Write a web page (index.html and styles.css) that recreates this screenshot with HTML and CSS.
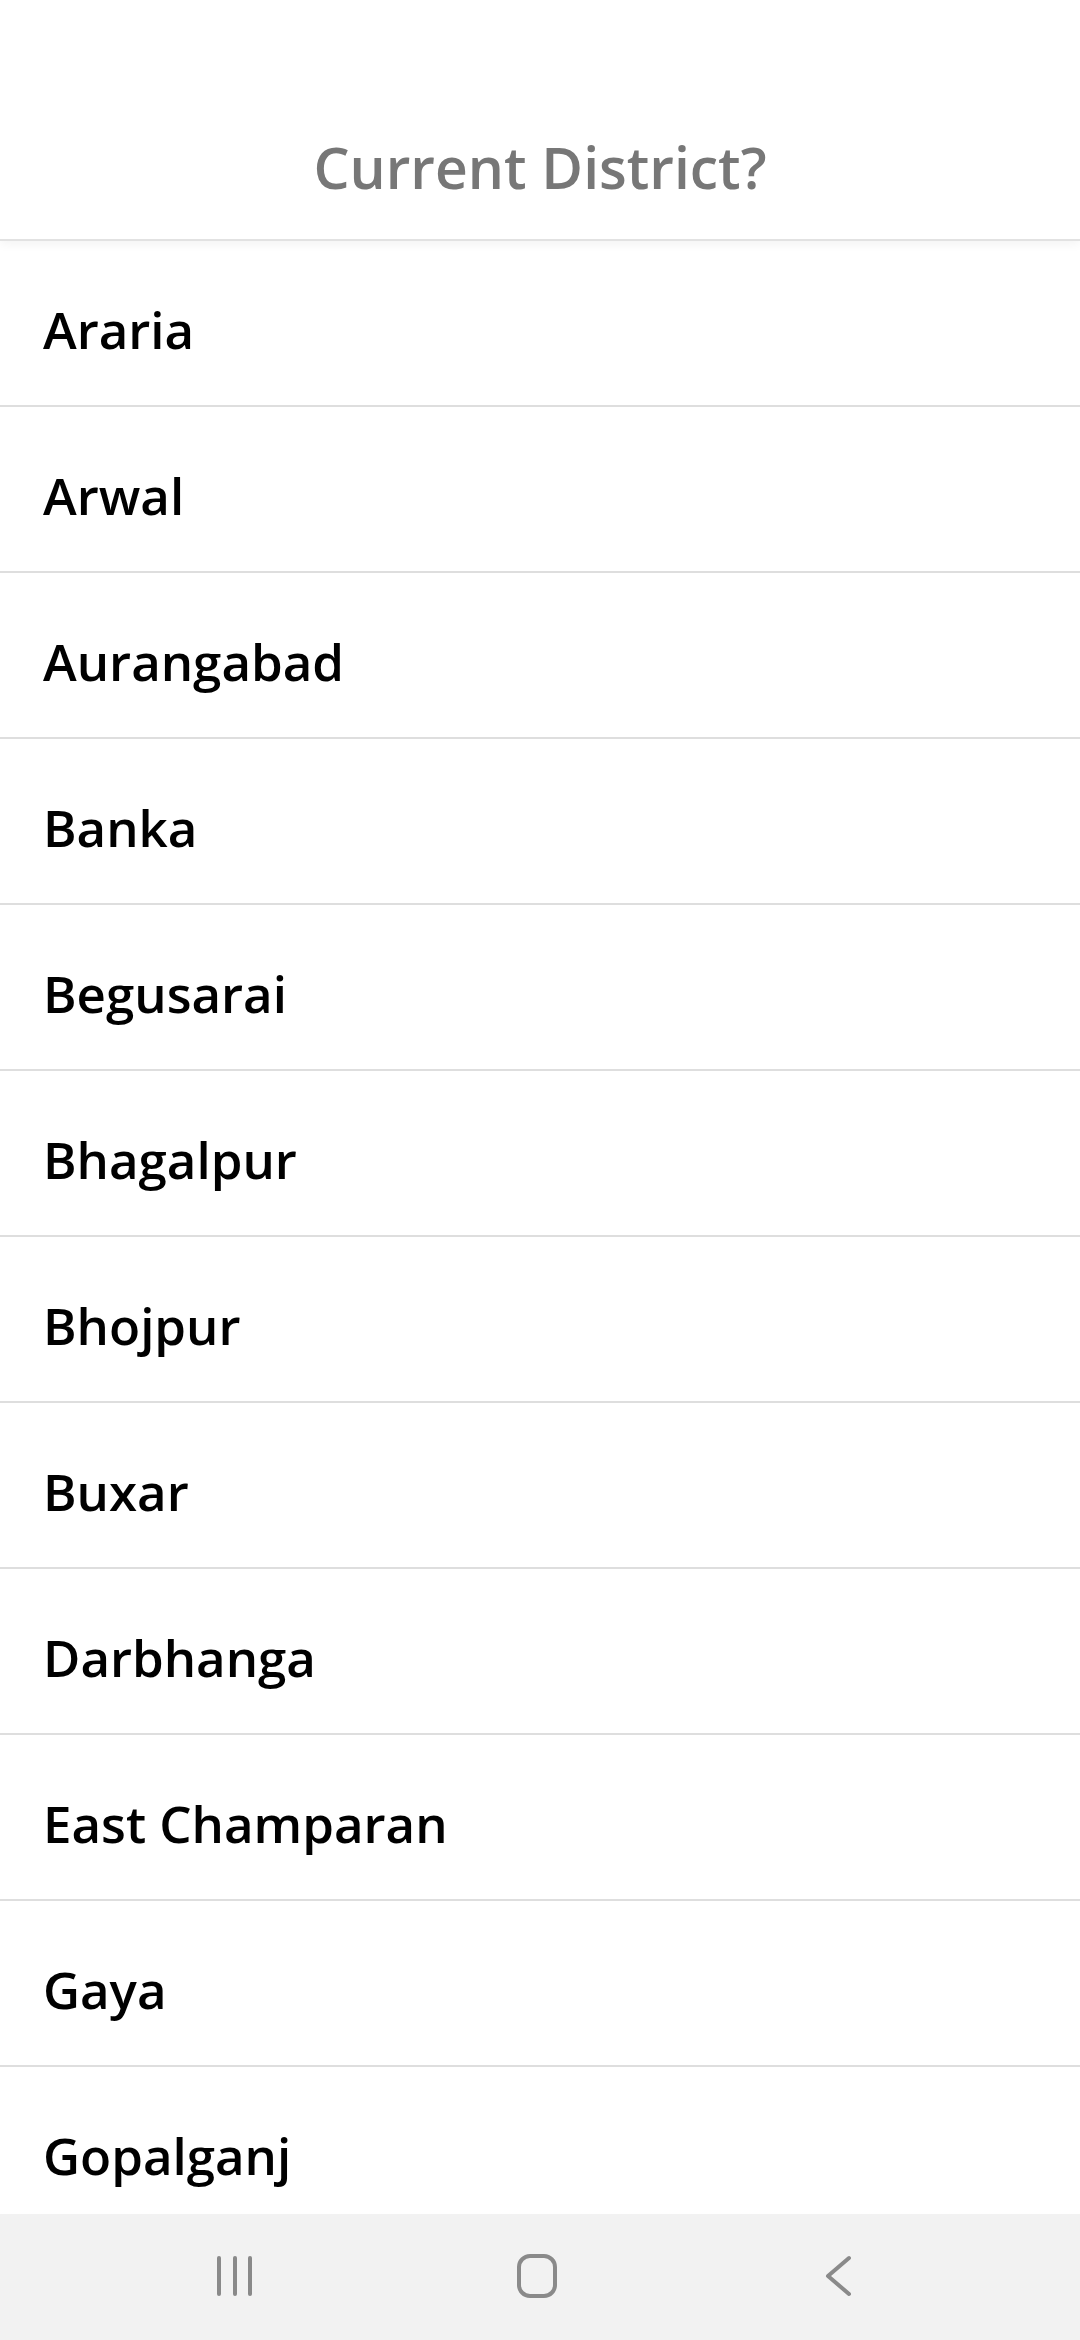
FILE: index.html
```html
<!DOCTYPE html>
<html>
<head>
<meta charset="utf-8">
<link rel="stylesheet" href="styles.css">
</head>
<body>
<div class="screen">
  <header class="header"><h1 class="title">Current District?</h1></header>
  <ul class="list">
    <li class="row">Araria</li>
    <li class="row">Arwal</li>
    <li class="row">Aurangabad</li>
    <li class="row">Banka</li>
    <li class="row">Begusarai</li>
    <li class="row">Bhagalpur</li>
    <li class="row">Bhojpur</li>
    <li class="row">Buxar</li>
    <li class="row">Darbhanga</li>
    <li class="row">East Champaran</li>
    <li class="row">Gaya</li>
    <li class="row">Gopalganj</li>
  </ul>
  <nav class="navbar">
    <span class="nav-icon">
      <svg width="60" height="60" viewBox="0 0 60 60"><g stroke="#8a8a8a" stroke-width="4" stroke-linecap="round"><line x1="14" y1="11" x2="14" y2="47"/><line x1="30" y1="11" x2="30" y2="47"/><line x1="45" y1="11" x2="45" y2="47"/></g></svg>
    </span>
    <span class="nav-icon">
      <svg width="60" height="60" viewBox="0 0 60 60"><rect x="12" y="9" width="36" height="40" rx="11" fill="none" stroke="#8a8a8a" stroke-width="4"/></svg>
    </span>
    <span class="nav-icon">
      <svg width="60" height="60" viewBox="0 0 60 60"><polyline points="40,11 19,29 40,47" fill="none" stroke="#8a8a8a" stroke-width="4" stroke-linecap="round" stroke-linejoin="round"/></svg>
    </span>
  </nav>
</div>
</body>
</html>
```
FILE: styles.css
```css
html, body {
  margin: 0;
  padding: 0;
  background: #ffffff;
}
.screen {
  width: 1080px;
  height: 2340px;
  overflow: hidden;
  display: flex;
  flex-direction: column;
  font-family: "Open Sans", "Noto Sans", sans-serif;
}
.header {
  height: 239px;
  flex: 0 0 auto;
  border-bottom: 2px solid #e2e2e2;
  box-shadow: 0 3px 10px rgba(0, 0, 0, 0.05);
  display: flex;
  align-items: center;
  justify-content: center;
  position: relative;
  z-index: 1;
  background: #fff;
}
.title {
  margin: 0;
  padding-top: 96px;
  font-size: 57px;
  font-weight: 600;
  color: #777777;
  line-height: 1;
}
.list {
  list-style: none;
  margin: 0;
  padding: 0;
  flex: 1 1 auto;
  overflow: hidden;
}
.row {
  box-sizing: border-box;
  height: 166px;
  border-bottom: 2px solid #dedede;
  display: flex;
  align-items: center;
  padding-left: 43px;
  padding-top: 12px;
  font-size: 51px;
  font-weight: 600;
  color: #000;
}
.navbar {
  flex: 0 0 126px;
  height: 126px;
  background: #f2f2f2;
  display: flex;
  align-items: center;
  justify-content: center;
  gap: 242px;
  padding-right: 7px;
}
.nav-icon {
  width: 60px;
  height: 60px;
  display: block;
}
.nav-icon svg {
  display: block;
}
```
